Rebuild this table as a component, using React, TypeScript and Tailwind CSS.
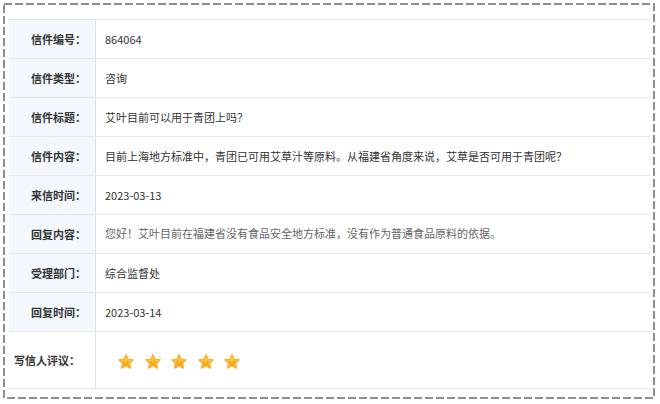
import React from "react";

const rows = [
  { label: "信件编号：", value: "864064" },
  { label: "信件类型：", value: "咨询" },
  { label: "信件标题：", value: "艾叶目前可以用于青团上吗？" },
  {
    label: "信件内容：",
    value: "目前上海地方标准中，青团已可用艾草汁等原料。从福建省角度来说，艾草是否可用于青团呢？",
  },
  { label: "来信时间：", value: "2023-03-13" },
  {
    label: "回复内容：",
    value: "您好！艾叶目前在福建省没有食品安全地方标准，没有作为普通食品原料的依据。",
    serif: true,
  },
  { label: "受理部门：", value: "综合监督处" },
  { label: "回复时间：", value: "2023-03-14" },
];

const Star = ({ id }: { id: number }) => (
  <svg viewBox="0 0 24 24" className="w-[18px] h-[18px]">
    <defs>
      <linearGradient id={`sg${id}`} x1="0" y1="0" x2="0" y2="1">
        <stop offset="0" stopColor="#ffd84d" />
        <stop offset="1" stopColor="#f7a81c" />
      </linearGradient>
    </defs>
    <path
      d="M12 2.2 L14.9 8.3 L21.6 9.1 L16.7 13.7 L18 20.4 L12 17.1 L6 20.4 L7.3 13.7 L2.4 9.1 L9.1 8.3 Z"
      fill={`url(#sg${id})`}
      stroke="#f8ac2a"
      strokeWidth="1.6"
      strokeLinejoin="round"
    />
    <circle cx="9.6" cy="12" r="1" fill="#e98a0a" />
    <circle cx="14.4" cy="12" r="1" fill="#e98a0a" />
    <path d="M9.8 14.4 Q12 16.4 14.2 14.4" fill="none" stroke="#e98a0a" strokeWidth="1.1" strokeLinecap="round" />
  </svg>
);

export default function App() {
  return (
    <div className="w-[660px] h-[404px] bg-white p-[3px] font-['Noto_Sans_CJK_SC','Noto_Sans',sans-serif]">
      <div className="relative w-[652px] h-[396px] pt-[16px] pl-[6px] pr-[5px]">
        {/* dashed frame */}
        <svg className="absolute inset-0 pointer-events-none" width="652" height="396">
          <rect x="1" y="1" width="650" height="394" fill="none" stroke="#8f8f8f" strokeWidth="2" strokeDasharray="8 3" />
        </svg>
        <div className="border-t border-[#e3e6ea] text-[11px]">
          {rows.map((r) => (
            <div key={r.label} className="flex h-[39px] border-b border-[#e3e6ea]">
              <div className="w-[87px] shrink-0 bg-[#f3f8fe] border-r border-[#dde1e6] flex items-center justify-end pr-[9px] font-bold text-[#333]">
                {r.label}
              </div>
              <div
                className={
                  r.serif
                    ? "flex items-center pl-[9px] text-[#666] font-['Liberation_Serif','Noto_Sans_CJK_SC',serif]"
                    : "flex items-center pl-[9px] text-[#333]"
                }
              >
                {r.value}
              </div>
            </div>
          ))}
          <div className="flex h-[57px] border-b border-[#e3e6ea]">
            <div className="w-[87px] shrink-0 border-r border-[#dde1e6] flex items-center pl-[5px] font-bold text-[#333]">
              写信人评议：
            </div>
            <div className="flex items-center pl-[21px] gap-[8.5px] pt-[3px]">
              {[0, 1, 2, 3, 4].map((i) => (
                <Star key={i} id={i} />
              ))}
            </div>
          </div>
        </div>
      </div>
    </div>
  );
}
